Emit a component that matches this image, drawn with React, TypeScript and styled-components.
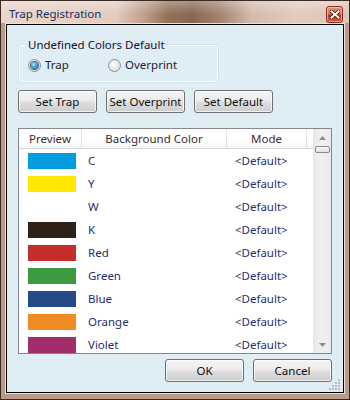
import React from "react";
import styled, { createGlobalStyle } from "styled-components";

const Global = createGlobalStyle`
  html, body { margin: 0; padding: 0; background: #ffffff; }
  body { font-family: "Noto Sans", "Open Sans", sans-serif; font-size: 11.5px; }
  * { box-sizing: border-box; }
`;

const Window = styled.div`
  width: 350px;
  height: 400px;
  border: 1px solid #3b2b22;
  background: #b99b89;
  display: flex;
  flex-direction: column;
  padding: 0 4px 5px 4px;
  position: relative;
`;

const TitleBar = styled.div`
  height: 22px;
  margin: 0 -4px;
  padding: 0 6px 0 8px;
  display: flex;
  align-items: center;
  justify-content: space-between;
  background:
    linear-gradient(180deg, rgba(255,255,255,0.3) 0%, rgba(255,255,255,0) 60%),
    linear-gradient(90deg, #e9d5c9 0%, #e4ccbf 33%, #c09f8b 41%, #93725a 48%, #886752 55%, #a38470 63%, #d4bbad 72%, #e3cbbe 85%, #dec4b6 100%);
`;

const Title = styled.span`
  color: #1a3060;
  line-height: 16px;
  padding-top: 3px;
`;

const CloseButton = styled.div`
  width: 17px;
  height: 17px;
  margin-top: 4px;
  border: 1px solid #7e3424;
  border-radius: 3px;
  background: linear-gradient(180deg, #eb9580 0%, #dc6a50 45%, #c43a20 55%, #d4583a 100%);
  box-shadow: inset 0 0 0 1px rgba(255,215,200,0.55);
  display: flex;
  align-items: center;
  justify-content: center;
`;

const Frame = styled.div`
  flex: 1;
  border: 1px solid #ece2dc;
  display: flex;
  min-height: 0;
`;

const Client = styled.div`
  flex: 1;
  border: 1px solid #000000;
  background: #dfedf4;
  display: flex;
  flex-direction: column;
  padding: 12px 11px 0 11px;
  min-height: 0;
`;

const GroupBox = styled.fieldset`
  width: 199px;
  margin: 0 0 0 1px;
  padding: 4px 8px 8px 8px;
  border: 1px solid #ffffff;
  border-radius: 3px;
  box-shadow: 0 0 0 1px rgba(190,205,214,0.35);
`;

const Legend = styled.legend`
  padding: 0 2px;
  margin-left: -2px;
  line-height: 16px;
  color: #1b1030;
`;

const RadioRow = styled.div`
  display: flex;
  align-items: center;
  height: 16px;
`;

const RadioLabel = styled.label<{ $width?: number }>`
  display: flex;
  align-items: center;
  gap: 4px;
  width: ${(p) => (p.$width ? `${p.$width}px` : "auto")};
  color: #1c1c3a;
  line-height: 16px;
`;

const RadioCircle = styled.span<{ $checked?: boolean }>`
  width: 13px;
  height: 13px;
  border-radius: 50%;
  border: 1px solid #8e8f8f;
  background: radial-gradient(circle at 40% 35%, #ffffff 0%, #e4e4e4 60%, #cfcfcf 100%);
  display: flex;
  align-items: center;
  justify-content: center;
  &::after {
    content: "";
    display: ${(p) => (p.$checked ? "block" : "none")};
    width: 7px;
    height: 7px;
    border-radius: 50%;
    background: radial-gradient(circle at 40% 35%, #b8e4fb 0%, #3b9fd7 45%, #125d8e 100%);
    box-shadow: 0 0 0 1px #2c628b;
  }
`;

const ButtonRow = styled.div<{ $end?: boolean; $top: number }>`
  display: flex;
  gap: 9px;
  margin-top: ${(p) => p.$top}px;
  justify-content: ${(p) => (p.$end ? "flex-end" : "flex-start")};
`;

const Button = styled.div`
  width: 79px;
  height: 23px;
  border: 1px solid #707070;
  border-radius: 3px;
  background: linear-gradient(180deg, #f4f4f4 0%, #ebebeb 48%, #dddddd 52%, #cfcfcf 100%);
  box-shadow: inset 0 0 0 1px rgba(255,255,255,0.7);
  display: flex;
  align-items: center;
  justify-content: center;
  color: #111111;
  line-height: 16px;
  white-space: nowrap;
`;

const List = styled.div`
  margin-top: 15px;
  height: 226px;
  flex: none;
  border: 1px solid #828790;
  background: #ffffff;
  display: flex;
  overflow: hidden;
`;

const Grid = styled.div`
  flex: 1;
  display: flex;
  flex-direction: column;
  overflow: hidden;
`;

const HeaderRow = styled.div`
  display: flex;
  height: 20px;
  flex: none;
  border-bottom: 1px solid #d5d5d5;
  background: linear-gradient(180deg, #ffffff 0%, #ffffff 50%, #f5f6f7 100%);
`;

const HeaderCell = styled.div<{ $w: number }>`
  width: ${(p) => p.$w}px;
  border-right: 1px solid #e3e4e8;
  display: flex;
  align-items: center;
  justify-content: center;
  color: #3a2e2a;
  line-height: 16px;
`;

const Row = styled.div`
  display: flex;
  height: 23px;
  flex: none;
  align-items: center;
`;

const PreviewCell = styled.div`
  width: 63px;
  padding-left: 9px;
  display: flex;
  align-items: center;
`;

const Swatch = styled.div<{ $color: string }>`
  width: 48px;
  height: 16px;
  background: ${(p) => p.$color};
`;

const TextCell = styled.div<{ $w: number; $pad: number }>`
  width: ${(p) => p.$w}px;
  padding-left: ${(p) => p.$pad}px;
  color: #1f2d6e;
  line-height: 16px;
  white-space: nowrap;
`;

const ScrollBar = styled.div`
  width: 18px;
  flex: none;
  background: linear-gradient(90deg, #e6e6e6 0%, #f0f0f0 40%, #ebebeb 100%);
  display: flex;
  flex-direction: column;
  align-items: center;
`;

const ArrowBox = styled.div`
  height: 17px;
  width: 100%;
  display: flex;
  align-items: center;
  justify-content: center;
`;

const Thumb = styled.div`
  width: 15px;
  height: 7px;
  border: 1px solid #8a8a8a;
  border-radius: 2px;
  background: linear-gradient(180deg, #f6f6f6 0%, #dedede 100%);
`;

const Spacer = styled.div`
  flex: 1;
`;

const Grip = styled.svg`
  position: absolute;
  right: 9px;
  bottom: 9px;
`;

const rows: { name: string; color: string }[] = [
  { name: "C", color: "#019ddf" },
  { name: "Y", color: "#ffe800" },
  { name: "W", color: "#ffffff" },
  { name: "K", color: "#2e2118" },
  { name: "Red", color: "#c42f2a" },
  { name: "Green", color: "#3e9a40" },
  { name: "Blue", color: "#264a88" },
  { name: "Orange", color: "#f08b23" },
  { name: "Violet", color: "#a22d6b" },
];

export default function App() {
  return (
    <>
      <Global />
      <Window>
        <TitleBar>
          <Title>Trap Registration</Title>
          <CloseButton>
            <svg width="10" height="9" viewBox="0 0 10 9">
              <path d="M1.5 1.5 L8.5 7.5 M8.5 1.5 L1.5 7.5" stroke="#3c140c" strokeWidth="3.6" strokeLinecap="square" />
              <path d="M1.5 1.5 L8.5 7.5 M8.5 1.5 L1.5 7.5" stroke="#ffffff" strokeWidth="2" strokeLinecap="square" />
            </svg>
          </CloseButton>
        </TitleBar>
        <Frame>
          <Client>
            <GroupBox>
              <Legend>Undefined Colors Default</Legend>
              <RadioRow>
                <RadioLabel $width={80}>
                  <RadioCircle $checked />
                  Trap
                </RadioLabel>
                <RadioLabel>
                  <RadioCircle />
                  Overprint
                </RadioLabel>
              </RadioRow>
            </GroupBox>
            <ButtonRow $top={8}>
              <Button>Set Trap</Button>
              <Button>Set Overprint</Button>
              <Button>Set Default</Button>
            </ButtonRow>
            <List>
              <Grid>
                <HeaderRow>
                  <HeaderCell $w={63}>Preview</HeaderCell>
                  <HeaderCell $w={145}>Background Color</HeaderCell>
                  <HeaderCell $w={80}>Mode</HeaderCell>
                </HeaderRow>
                {rows.map((r) => (
                  <Row key={r.name}>
                    <PreviewCell>
                      <Swatch $color={r.color} />
                    </PreviewCell>
                    <TextCell $w={145} $pad={6}>
                      {r.name}
                    </TextCell>
                    <TextCell $w={80} $pad={8}>
                      {"<Default>"}
                    </TextCell>
                  </Row>
                ))}
              </Grid>
              <ScrollBar>
                <ArrowBox>
                  <svg width="7" height="4" viewBox="0 0 7 4">
                    <path d="M0 4 L3.5 0 L7 4 Z" fill="#8c8c8c" />
                  </svg>
                </ArrowBox>
                <Thumb />
                <Spacer />
                <ArrowBox>
                  <svg width="7" height="4" viewBox="0 0 7 4">
                    <path d="M0 0 L3.5 4 L7 0 Z" fill="#8c8c8c" />
                  </svg>
                </ArrowBox>
              </ScrollBar>
            </List>
            <ButtonRow $end $top={5}>
              <Button>OK</Button>
              <Button>Cancel</Button>
            </ButtonRow>
          </Client>
        </Frame>
        <Grip width="11" height="11" viewBox="0 0 11 11">
          {[
            [9, 1], [9, 4], [6, 4], [9, 7], [6, 7], [3, 7], [9, 10], [6, 10], [3, 10], [0, 10],
          ].map(([x, y], i) => (
            <rect key={i} x={x} y={y - 1} width="2" height="2" fill="#b9b9b9" />
          ))}
        </Grip>
      </Window>
    </>
  );
}
